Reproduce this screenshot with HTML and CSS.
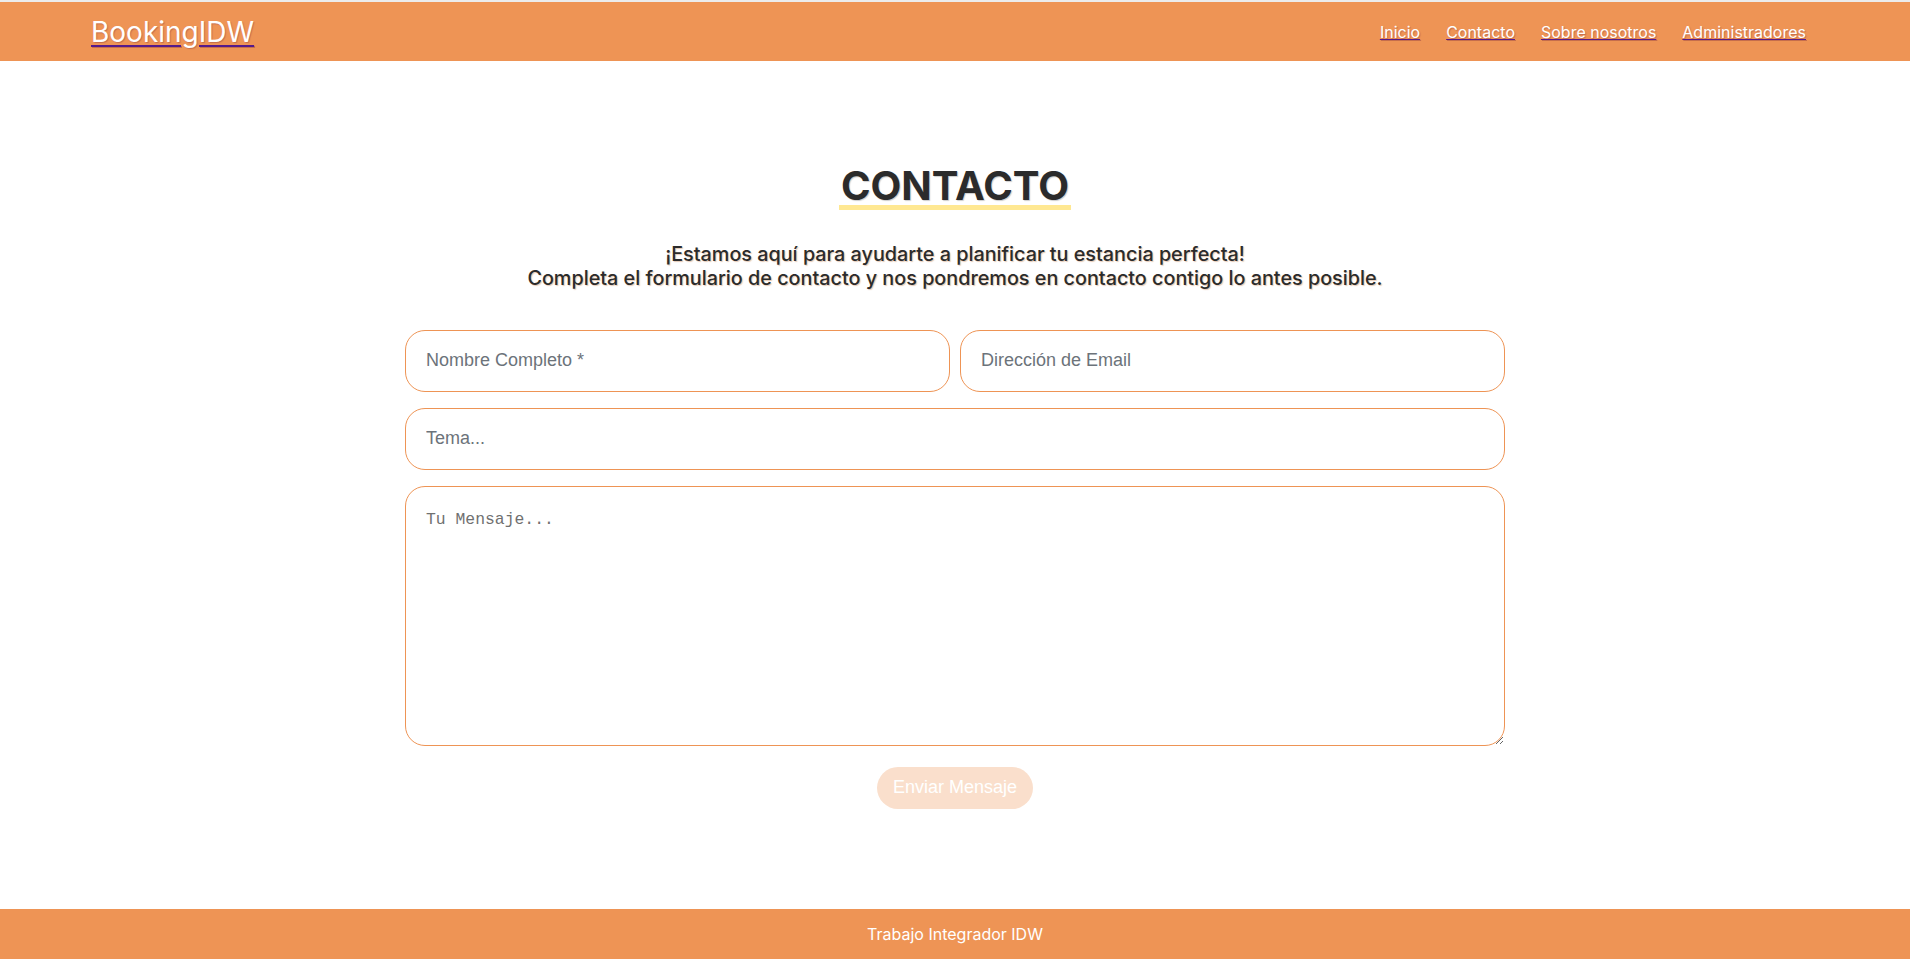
FILE: index.html
```html
<!DOCTYPE html>
<html lang="es">
<head>
<meta charset="utf-8">
<title>Contacto - BookingIDW</title>
<link rel="stylesheet" href="styles.css">
</head>
<body>
<header class="site-header">
  <a class="brand" href="#">BookingIDW</a>
  <nav class="nav">
    <a class="nav-link" href="#">Inicio</a>
    <a class="nav-link" href="#">Contacto</a>
    <a class="nav-link" href="#">Sobre nosotros</a>
    <a class="nav-link" href="#">Administradores</a>
  </nav>
</header>
<main class="main">
  <section class="contact">
    <h1 class="contact-title">CONTACTO</h1>
    <p class="contact-intro">¡Estamos aquí para ayudarte a planificar tu estancia perfecta!<br>Completa el formulario de contacto y nos pondremos en contacto contigo lo antes posible.</p>
    <form class="contact-form">
      <div class="row">
        <input class="field" type="text" placeholder="Nombre Completo *">
        <input class="field" type="email" placeholder="Dirección de Email">
      </div>
      <input class="field" type="text" placeholder="Tema...">
      <textarea class="field message" placeholder="Tu Mensaje..."></textarea>
      <button class="submit" type="submit" disabled>Enviar Mensaje</button>
    </form>
  </section>
</main>
<footer class="site-footer">Trabajo Integrador IDW</footer>
</body>
</html>
```
FILE: styles.css
```css
* { box-sizing: border-box; }
html, body { margin: 0; padding: 0; }
body {
  font-family: Inter, "Noto Sans", sans-serif;
  min-height: 100vh;
  display: flex;
  flex-direction: column;
  background: #fff;
  color: #2b2b2b;
}
.site-header {
  border-top: 2px solid #ececec;
  background: #ee9455;
  height: 61px;
  display: flex;
  align-items: center;
  justify-content: space-between;
  padding: 0 91px;
}
.brand {
  font-size: 28px;
  color: #fff;
  text-decoration: underline;
  text-decoration-color: #551a8b;
  text-underline-offset: 3px;
  text-shadow: 1px 1px 1px rgba(120, 40, 60, 0.35);
  line-height: 1;
}
.nav { display: flex; }
.nav-link {
  color: #fff;
  font-size: 16px;
  padding: 0 13px;
  text-decoration: underline;
  text-decoration-color: #551a8b;
  text-shadow: 1px 1px 1px rgba(120, 40, 60, 0.35);
}
.main {
  flex: 1;
  display: flex;
  align-items: center;
  justify-content: center;
  padding-top: 5px;
}
.contact {
  width: 1100px;
  display: flex;
  flex-direction: column;
  align-items: center;
}
.contact-title {
  margin: 0;
  font-size: 40px;
  font-weight: 700;
  line-height: 38px;
  padding: 0 2px;
  border-bottom: 5px solid #ffe892;
  color: #2b2b2b;
  text-shadow: 1px 1px 1px rgba(0, 0, 0, 0.2);
}
.contact-intro {
  margin: 32px 0 40px;
  text-align: center;
  font-size: 19.8px;
  font-weight: 500;
  line-height: 24px;
  color: #2b2b2b;
  text-shadow: 1px 1px 1px rgba(180, 100, 40, 0.35);
}
.contact-form {
  width: 100%;
  display: flex;
  flex-direction: column;
  align-items: center;
  gap: 16px;
}
.row {
  width: 100%;
  display: flex;
  gap: 10px;
}
.field {
  width: 100%;
  height: 62px;
  border: 1px solid #ee9455;
  border-radius: 20px;
  padding: 0 20px;
  font-family: "Liberation Sans", Arial, sans-serif;
  font-size: 18px;
  color: #333;
  background: #fff;
  outline: none;
}
.field::placeholder { color: #6c737a; }
.message {
  height: 260px;
  padding: 23px 20px 18px;
  font-family: "Liberation Mono", monospace;
  font-size: 16.4px;
  resize: vertical;
}
.message::placeholder { color: #707070; }
.submit {
  margin-top: 5px;
  height: 42px;
  padding: 0 16px;
  border: none;
  border-radius: 21px;
  background: #fadfcc;
  color: #fff;
  font-family: "Liberation Sans", Arial, sans-serif;
  font-size: 18px;
}
.site-footer {
  height: 50px;
  background: #ee9455;
  color: #fff;
  font-size: 16px;
  display: flex;
  align-items: center;
  justify-content: center;
}
```
